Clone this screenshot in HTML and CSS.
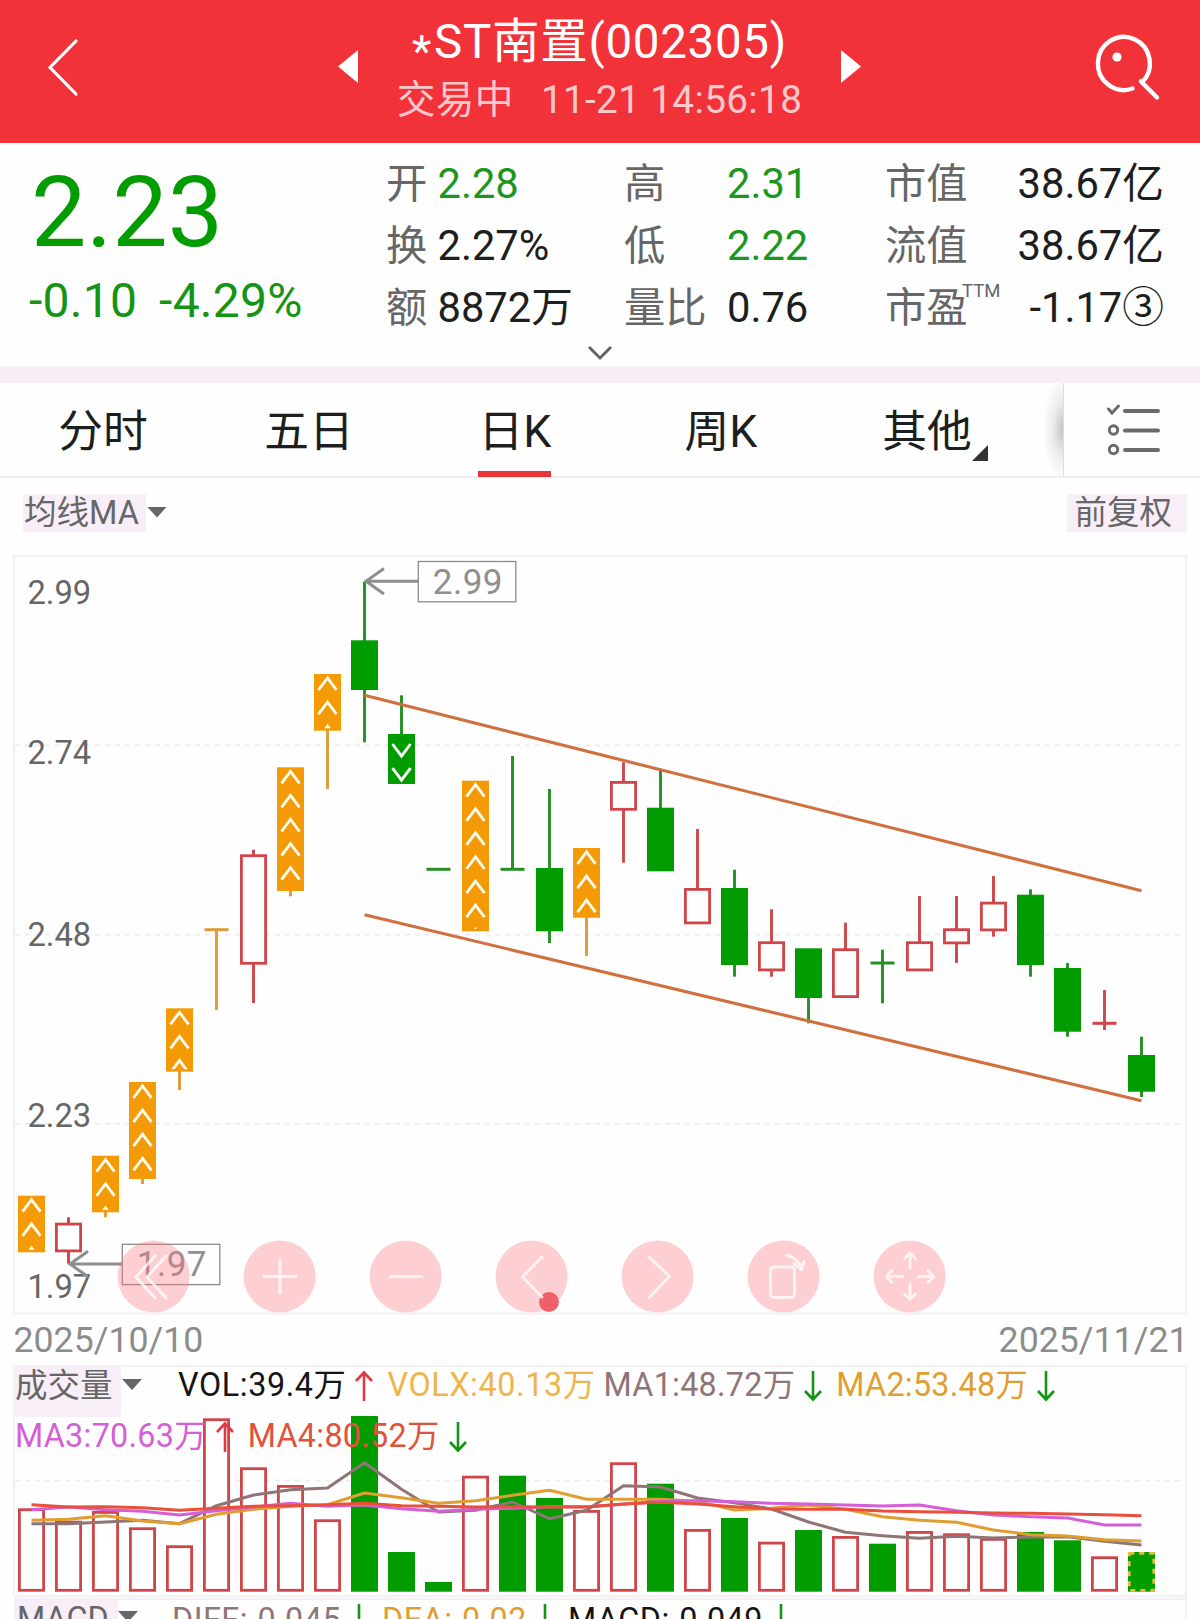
FILE: index.html
```html
<!DOCTYPE html>
<html lang="zh-CN">
<head>
<meta charset="utf-8">
<title>*ST南置(002305)</title>
<link rel="stylesheet" href="styles.css">
</head>
<body>
<div class="app">
  <header class="topbar">
    <svg class="back" viewBox="0 0 33 60" fill="none" stroke="#fff" stroke-width="3.2" stroke-linecap="round"><path d="M29 4 3 30.500 29 57"/></svg>
    <svg class="step" viewBox="0 0 20 33" fill="#fff"><path d="M20 0V33L0 16.500z"/></svg>
    <div class="heading">
      <h1 class="name"><span class="star">*</span>ST南置(002305)</h1>
      <p class="status">交易中<span class="time">11-21 14:56:18</span></p>
    </div>
    <svg class="step" viewBox="0 0 20 33" fill="#fff"><path d="M0 0V33L20 16.500z"/></svg>
    <svg class="search" viewBox="0 0 70 70" fill="none" stroke="#fff" stroke-width="4.400" stroke-linecap="round"><path d="M40.500 57.500A26 26.500 0 1 1 50 51.500L65 66.500M50 51.500 49 50"/><circle cx="25" cy="26" r="4.600" fill="#fff" stroke="none"/></svg>
  </header>

  <section class="quote">
    <div class="price-box">
      <div class="price">2.23</div>
      <div class="change"><span>-0.10</span><span>-4.29%</span></div>
    </div>
    <div class="stats">
      <div class="stat"><span class="k k1">开</span><span class="v down">2.28</span></div>
      <div class="stat"><span class="k k2">高</span><span class="v down">2.31</span></div>
      <div class="stat wide"><span class="k">市值</span><span class="v">38.67亿</span></div>
      <div class="stat"><span class="k k1">换</span><span class="v">2.27%</span></div>
      <div class="stat"><span class="k k2">低</span><span class="v down">2.22</span></div>
      <div class="stat wide"><span class="k">流值</span><span class="v">38.67亿</span></div>
      <div class="stat"><span class="k k1">额</span><span class="v">8872万</span></div>
      <div class="stat"><span class="k k2">量比</span><span class="v">0.76</span></div>
      <div class="stat wide"><span class="k">市盈<span class="ttm">TTM</span></span><span class="v">-1.17③</span></div>
    </div>
    <svg class="more" viewBox="0 0 26 16" fill="none" stroke="#666" stroke-width="3"><path d="M2 2 13 13 24 2"/></svg>
  </section>

  <nav class="tabs">
    <div class="tab">分时</div>
    <div class="tab">五日</div>
    <div class="tab active">日K</div>
    <div class="tab">周K</div>
    <div class="tab">其他<i class="corner"></i></div>
    <div class="tab-shade"></div>
    <div class="tab-list">
      <svg width="54" height="54" viewBox="0 0 54 54" fill="none" stroke="#6b6b6b" stroke-width="4" stroke-linecap="round"><path d="M19 8H52M19 27.500H52M19 47H52"/><g stroke-width="3"><path d="M2.500 6 6 10 12.500 3"/><circle cx="7.500" cy="27" r="4.200"/><circle cx="7.500" cy="46.500" r="4.200"/></g></svg>
    </div>
  </nav>

  <div class="ma-bar">
    <div class="pick"><span class="chip">均线MA</span><i class="caret"></i></div>
    <span class="chip adj">前复权</span>
  </div>

  <section class="kline">
    <svg id="kline" width="1200" height="759" viewBox="0 556 1200 759"></svg>
    <svg class="tools" width="900" height="74" viewBox="116 1239 900 74" fill="none" stroke="#fff" stroke-opacity=".72" stroke-width="3" stroke-linecap="round" stroke-linejoin="round">
      <g fill="#fd7985" fill-opacity=".35" stroke="none">
        <circle cx="153.600" cy="1276.500" r="36"/><circle cx="279.600" cy="1276.500" r="36"/><circle cx="405.600" cy="1276.500" r="36"/><circle cx="531.600" cy="1276.500" r="36"/><circle cx="657.600" cy="1276.500" r="36"/><circle cx="783.600" cy="1276.500" r="36"/><circle cx="909.600" cy="1276.500" r="36"/>
      </g>
      <circle cx="549" cy="1302" r="10" fill="#f0606a" stroke="none"/>
      <path d="M155 1256 136 1277 155 1298M166 1256 147 1277 166 1298"/>
      <path d="M264 1276.500H296M280 1260V1293"/>
      <path d="M390 1276.500H422"/>
      <path d="M542 1257 522.500 1277 542 1297"/>
      <path d="M649 1257 669.500 1276.500 649 1298"/>
      <rect x="770.500" y="1267" width="24" height="30.500" rx="4"/>
      <path d="M787 1255.500C795 1257 800 1263 801.500 1269M794 1264 801.500 1269.500 804 1261.500"/>
      <path d="M910 1268V1253.500M904.500 1258.500 910 1253 915.500 1258.500M910 1284V1299M904.500 1294 910 1299 915.500 1294M903 1276.500H887M892 1270.500 886.500 1276.500 892 1282.500M918 1276.500H933M928 1270.500 933.500 1276.500 928 1282.500"/>
    </svg>
  </section>
  <div class="dates"><span>2025/10/10</span><span>2025/11/21</span></div>

  <section class="volume">
    <svg id="volume" width="1200" height="232" viewBox="0 1365 1200 232"></svg>
    <div class="legend">
      <div class="line">
        <span class="ind">成交量</span><i class="caret"></i>
        <span class="t black first">VOL:39.4万</span><svg class="arr up"><use href="#arr"/></svg>
        <span class="t gold">VOLX:40.13万</span>
        <span class="t brown ma1">MA1:48.72万</span><svg class="arr dn"><use href="#arr"/></svg>
        <span class="t orange">MA2:53.48万</span><svg class="arr dn"><use href="#arr"/></svg>
      </div>
      <div class="line second">
        <span class="t violet">MA3:70.63万</span><svg class="arr up"><use href="#arr"/></svg>
        <span class="t red">MA4:80.52万</span><svg class="arr dn"><use href="#arr"/></svg>
      </div>
    </div>
  </section>

  <section class="macd">
    <span class="ind">MACD</span><i class="caret"></i>
    <span class="t brown diff">DIFF:-0.045</span><svg class="arr dn"><use href="#arr"/></svg>
    <span class="t orange">DEA:-0.02</span><svg class="arr dn"><use href="#arr"/></svg>
    <span class="t black">MACD:-0.049</span><svg class="arr dn"><use href="#arr"/></svg>
  </section>
</div>
<svg class="defs"><symbol id="arr" viewBox="0 0 20 32"><path d="M10 31V2M2 11 10 2.500 18 11" fill="none" stroke="currentColor" stroke-width="2.600"/></symbol></svg>
<script src="chart.js"></script>
</body>
</html>
```
FILE: styles.css
```css
* { box-sizing: border-box; }
body {
  margin: 0;
  background: #fefefe;
  font-family: Roboto, "Noto Sans CJK SC", sans-serif;
  color: #1c1f1e;
}
.app { width: 1200px; height: 1619px; overflow: hidden; display: flex; flex-direction: column; }
.app > * { flex: none; }
.defs { position: absolute; width: 0; height: 0; }

.topbar {
  height: 142.5px;
  background: #f23239;
  color: #fff;
  display: flex;
  align-items: flex-start;
}
.back { width: 33px; height: 60px; margin: 37px 0 0 47px; }
.step { width: 20px; height: 33px; margin-top: 50px; }
.back + .step { margin-left: 258px; }
.heading { width: 483px; padding-top: 12px; text-align: center; }
.name { margin: 0; font-size: 47.5px; line-height: 60px; font-weight: 400; letter-spacing: .7px; white-space: nowrap; }
.star { display: inline-block; line-height: 20px; vertical-align: -9px; font-size: 45px; margin-right: 2px; }
.status { margin: 3px 0 0; font-size: 38.7px; line-height: 50px; letter-spacing: .35px; color: #ffc9cc; white-space: nowrap; }
.time { margin-left: 27px; }
.search { width: 70px; height: 70px; margin: 31px 0 0 230.5px; }

.quote { height: 223.5px; position: relative; display: flex; }
.price-box { width: 386px; padding: 20.5px 0 0 31px; color: #009c00; }
.price { font-size: 98.5px; line-height: 100px; }
.change { margin: 8px 0 0 -2px; font-size: 48px; line-height: 60px; letter-spacing: .25px; display: flex; gap: 22px; color: #149414; }
.stats {
  padding-top: 10.5px;
  display: grid;
  grid-template-columns: 238px 261px 279px;
  grid-auto-rows: 61.8px;
  align-content: start;
  font-size: 41.7px;
  line-height: 62px;
}
.stat { display: flex; white-space: nowrap; }
.wide { justify-content: space-between; }
.k { color: #666; position: relative; font-size: 41.3px; }
.k1 { width: 51.5px; }
.k2 { width: 103px; }
.down { color: #1c961c; }
.ttm { position: absolute; left: 77px; top: 4px; font-size: 18.5px; line-height: 20px; }
.more { position: absolute; left: 587px; top: 202.5px; width: 26px; height: 16px; }

.tabs {
  height: 112px;
  border-top: 17px solid #f7edf6;
  border-bottom: 2px solid #f0f0f0;
  display: flex;
}
.tab {
  width: 206px;
  text-align: center;
  font-size: 44.8px;
  line-height: 98px;
  position: relative;
}
.active::after { content: ""; position: absolute; left: 66px; bottom: -1px; width: 73px; height: 6.5px; background: #e8343b; }
.corner { position: absolute; left: 148px; top: 62px; width: 16px; height: 16px; background: #333; clip-path: polygon(100% 0, 100% 100%, 0 100%); }
.tab-shade { width: 33px; background: radial-gradient(ellipse 20px 52px at 100% 50%, #c4c2c4 0, rgba(225,220,225,.6) 50%, rgba(255,255,255,0) 100%); }
.tab-list { flex: 1; border-left: 1px solid #ddd; padding: 20px 0 0 42px; }

.ma-bar { height: 78px; padding: 16px 13.5px 0 23px; display: flex; justify-content: space-between; font-size: 32.5px; color: #666; }
.pick { display: flex; }
.chip { height: 38px; width: 123px; padding-left: 1px; background: #f8eef7; line-height: 38px; white-space: nowrap; }
.adj { width: 120px; padding-left: 8px; }
.caret { width: 20px; height: 11px; background: #666; clip-path: polygon(0 0, 100% 0, 50% 100%); }
.pick .caret { margin: 12.500px 0 0 1px; }

.kline { height: 759px; position: relative; }
.kline svg, .volume > svg { display: block; }
#kline { overflow: visible; }
.tools { position: absolute; left: 116px; top: 683px; }
.dates { height: 50px; padding: 0 11.500px 0 13.500px; display: flex; justify-content: space-between; font-size: 35.7px; line-height: 50px; color: #8c8c8c; }

.volume { height: 232px; position: relative; }
.legend { position: absolute; left: 14px; top: 0; font-size: 32.3px; }
.t { letter-spacing: .28px; }
.line { display: flex; height: 51px; line-height: 41px; white-space: nowrap; }
.ind { width: 107px; height: 51px; margin-top: 1px; padding-left: 1px; background: #f8eef7; color: #666; font-size: 32.5px; line-height: 40px; }
.line .caret { margin: 14px 0 0 1px; }
.first { margin-left: 36px; }
.line .first, .line .gold { letter-spacing: .6px; }
.arr { width: 20px; height: 32px; margin: 5px 13px 0 8px; }
.up { color: #dc3b41; }
.dn { color: #149414; transform: scaleY(-1); }
.second { padding-left: 1px; }
.ma1 { margin-left: 8px; }
.black { color: #151515; }
.gold { color: #edb54c; }
.brown { color: #8f7575; }
.orange { color: #e09e30; }
.violet { color: #d45fd6; }
.red { color: #e0523c; }

.macd { height: 60px; margin: 1px 13px 0 14px; border: 2px solid #f2f0f2; font-size: 32.3px; line-height: 41px; display: flex; white-space: nowrap; }
.macd .ind { width: 102px; margin: 0; line-height: 39px; font-size: 32.3px; }
.macd .caret { margin: 11px 0 0 0; }
.diff { margin-left: 34px; }
.macd .t { letter-spacing: .5px; }
.macd .arr { margin-top: 3px; }
```
FILE: chart.js
```js
const NS = 'http://www.w3.org/2000/svg';
const GREEN = '#009c00', GREEN_LINE = '#249024', RED = '#cf4549', ORANGE = '#f39a06', ORANGE_LINE = '#dc9c38';
const centre = i => 31.5 + 37 * i;

function add(parent, tag, attrs, text) {
  const e = document.createElementNS(NS, tag);
  for (const k in attrs) e.setAttribute(k, attrs[k]);
  if (text) e.textContent = text;
  parent.appendChild(e);
  return e;
}
function line(p, x1, y1, x2, y2, stroke, w, extra) {
  add(p, 'line', Object.assign({ x1, y1, x2, y2, stroke, 'stroke-width': w }, extra));
}
function bar(p, i, top, bottom, kind) {
  const x = centre(i) - 13.5;
  if (kind === 'r') add(p, 'rect', { x: x + 1.4, y: top + 1.4, width: 24.2, height: bottom - top - 2.8, fill: '#fff', stroke: RED, 'stroke-width': 2.8 });
  else add(p, 'rect', { x, y: top, width: 27, height: bottom - top, fill: kind === 'o' ? ORANGE : GREEN });
}

/* kind, body top, body bottom, wick top, wick bottom */
const candles = [
  ['o', 1195.7, 1252.3], ['r', 1222.7, 1252.3, 1217.3, 1263.7], ['o', 1155.7, 1212.3, 1156, 1217.3],
  ['o', 1082, 1179, 1083, 1184], ['o', 1008.3, 1071.7, 1009, 1090], ['o', 929.7, 929.7, 929.7, 1010],
  ['r', 854.3, 964.7, 849.7, 1003], ['o', 767.3, 891, 768, 896.3], ['o', 674, 730.7, 675, 789],
  ['g', 640.3, 690, 582, 742.3], ['d', 734, 784, 695.3, 783], ['g', 869.3, 869.3],
  ['o', 780.7, 931.3], ['g', 869.3, 869.3, 756, 869.3], ['g', 868, 931.3, 789, 943],
  ['o', 848, 917.7, 849, 956], ['r', 781, 810.7, 762.3, 862.7], ['g', 807.7, 871.3, 770.7, 871],
  ['r', 888, 924.3, 829, 924], ['g', 888, 965, 869.7, 976.7], ['r', 941.3, 971.3, 909.3, 976.7],
  ['g', 948.3, 998, 949, 1023.3], ['r', 948.3, 998, 922.7, 997], ['g', 963, 963, 949.7, 1003.3],
  ['r', 941.3, 971.3, 896, 971], ['r', 928.3, 944.3, 896, 963], ['r', 901.7, 931.3, 876, 936.7],
  ['g', 894.7, 965, 889.3, 976.7], ['g', 968, 1031.7, 963, 1036.7], ['r', 1023.3, 1023.3, 990, 1030],
  ['g', 1055, 1091.7, 1036.7, 1097]
];

const k = document.getElementById('kline');
add(k, 'rect', { x: 14, y: 556, width: 1172, height: 757.5, fill: 'none', stroke: '#f2f0f2', 'stroke-width': 2 });
[745.3, 934.7, 1123.7].forEach(y => line(k, 15, y, 1186, y, '#ececec', 1.8, { 'stroke-dasharray': '5 5' }));

candles.forEach(([kind, top, bottom, hi, lo], i) => {
  const x = centre(i);
  const stroke = kind === 'r' ? RED : kind === 'o' ? ORANGE_LINE : GREEN_LINE;
  if (hi) line(k, x, hi, x, lo, stroke, 2.9);
  if (top === bottom) { line(k, x - 12, top, x + 12, top, stroke, 3); return; }
  bar(k, i, top, bottom, kind);
  if (kind === 'o') {
    const s = add(k, 'svg', { x: x - 13.5, y: top, width: 27, height: bottom - top - 2.5, overflow: 'hidden' });
    for (let y = 3; y < bottom - top; y += 24.1)
      add(s, 'path', { d: `M4.500 ${y + 13} 13.500 ${y + 1} 22.500 ${y + 13}`, fill: 'none', stroke: '#fffbe8', 'stroke-width': 2.9 });
  }
  if (kind === 'd')
    [10, 34.2].forEach(dy => add(k, 'path', { d: `M${x - 9} ${top + dy}l9 12 9 -12`, fill: 'none', stroke: '#fff', 'stroke-width': 2.9 }));
});

line(k, 364.5, 695.3, 1141.5, 890.7, '#d0703f', 3.1);
line(k, 364.5, 914.7, 1141.5, 1100.7, '#d0703f', 3.1);

[['2.99', 603.7], ['2.74', 763.7], ['2.48', 945.7], ['2.23', 1126.7], ['1.97', 1297.7]]
  .forEach(([t, y]) => add(k, 'text', { x: 27.5, y, 'font-size': 32.7, fill: '#666' }, t));

function callout(text, tipX, y, boxX, boxY, textY) {
  add(k, 'path', { d: `M${boxX} ${y}H${tipX}M${tipX + 19} ${y - 12.7}L${tipX + 1} ${y}L${tipX + 19} ${y + 12.7}`, fill: 'none', stroke: '#8f8f8f', 'stroke-width': 3 });
  add(k, 'rect', { x: boxX, y: boxY, width: 97.5, height: 40.3, fill: 'none', stroke: '#8a8a8a', 'stroke-width': 1.3 });
  add(k, 'text', { x: boxX + 14.5, y: textY, 'font-size': 35, 'letter-spacing': .5, fill: '#8f8f8f' }, text);
}
callout('2.99', 365, 581.3, 418.3, 561.5, 593.5);
callout('1.97', 69, 1264, 122.3, 1244.3, 1276.3);

/* volume bars and their moving averages */
const v = document.getElementById('volume');
add(v, 'rect', { x: 14, y: 1366, width: 1172, height: 230, fill: 'none', stroke: '#f2f0f2', 'stroke-width': 2 });
line(v, 15, 1480.7, 1186, 1480.7, '#ececec', 1.8, { 'stroke-dasharray': '5 5' });
const volumes = [1508.3, 1520.7, 1511, 1527.3, 1545.3, 1418.3, 1467.3, 1485, 1519.3, 1416, 1552, 1582, 1475.7, 1475.7, 1498,
  1510, 1462.3, 1483.7, 1529, 1518, 1541.7, 1530, 1536, 1543.7, 1531, 1533.3, 1538, 1532, 1540.3, 1556.3, 1552];
const falling = [9, 10, 11, 13, 14, 17, 19, 21, 23, 27, 28, 30];
volumes.forEach((top, i) => bar(v, i, top, 1591.7, falling.includes(i) ? 'g' : 'r'));
add(v, 'rect', { x: 1129.3, y: 1553.3, width: 24.5, height: 37, fill: 'none', stroke: '#e8bd3c', 'stroke-width': 2.8, 'stroke-dasharray': '5 5' });

const averages = [
  ['#8f7575', [551, 551, 546, 541, 551, 497, 465, 449, 444, 368, 448, 516, 511, 486, 536, 511, 437, 441, 474, 488, 507, 546, 577, 587, 595, 589, 594, 591, 590, 604, 615]],
  ['#e09e30', [541, 538, 527, 543, 551, 523, 508, 499, 494, 459, 473, 490, 482, 466, 451, 478, 478, 478, 484, 510, 505, 495, 508, 530, 541, 547, 570, 584, 588, 599, 603]],
  ['#d45fd6', [509, 501, 509, 514, 525, 512, 501, 490, 499, 495, 506, 514, 508, 505, 500, 500, 493, 484, 482, 485, 490, 492, 495, 498, 495, 512, 525, 530, 534, 555, 555]],
  ['#e8503c', [494, 501, 500, 503, 511, 505, 499, 497, 494, 490, 497, 499, 501, 500, 501, 501, 492, 487, 492, 500, 507, 508, 508, 513, 515, 517, 519, 520, 522, 524, 527]]
];
averages.forEach(([stroke, ys]) => add(v, 'polyline', {
  points: ys.map((y, i) => `${centre(i)},${(1340 + y / 3).toFixed(1)}`).join(' '),
  fill: 'none', stroke, 'stroke-width': 3, 'stroke-linejoin': 'round'
}));
```
